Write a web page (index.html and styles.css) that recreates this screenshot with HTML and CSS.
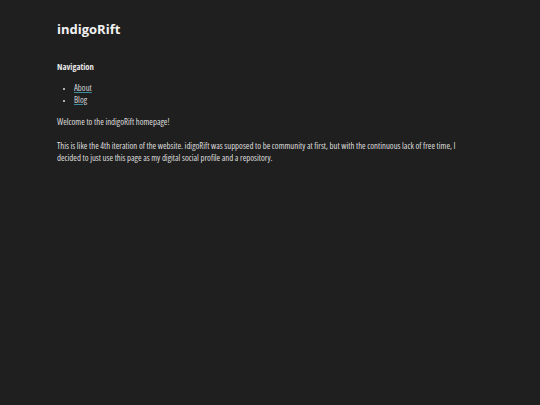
FILE: index.html
```html
<!DOCTYPE html>
<html lang="en">
<head>
<meta charset="utf-8">
<title>indigoRift</title>
<link rel="stylesheet" href="styles.css">
</head>
<body>
<main class="page">
  <h1 class="site-title">indigoRift</h1>
  <nav class="nav">
    <h2 class="nav-title">Navigation</h2>
    <ul class="nav-list">
      <li><a href="#about">About</a></li>
      <li><a href="#blog">Blog</a></li>
    </ul>
  </nav>
  <p class="text">Welcome to the indigoRift homepage!</p>
  <p class="text">This is like the 4th iteration of the website. idigoRift was supposed to be community at first, but with the continuous lack of free time, I decided to just use this page as my digital social profile and a repository.</p>
</main>
</body>
</html>
```
FILE: styles.css
```css
html, body {
  margin: 0;
  padding: 0;
  background: #1f1f1f;
}
body {
  color: #dedede;
  font-family: "Open Sans", "Noto Sans", sans-serif;
  font-stretch: 75%;
  font-size: 8.7px;
  line-height: 12px;
}
.page {
  padding: 21px 70px 20px 57px;
}
.site-title {
  margin: 0 0 24px;
  font-size: 13px;
  line-height: 16px;
  font-weight: 700;
  font-stretch: 100%;
  color: #f2f2f2;
}
.nav-title {
  margin: 0 0 9px;
  font-size: 8.7px;
  line-height: 12px;
  font-weight: 700;
  color: #e6e6e6;
}
.nav-list {
  margin: 0 0 10px;
  padding-left: 17px;
}
.nav-list li::marker {
  font-size: 7px;
}
.nav-list a {
  color: #cfd6dc;
  text-decoration: underline;
  text-decoration-color: #3f8e9c;
}
.text {
  margin: 0 0 12px;
}
```
